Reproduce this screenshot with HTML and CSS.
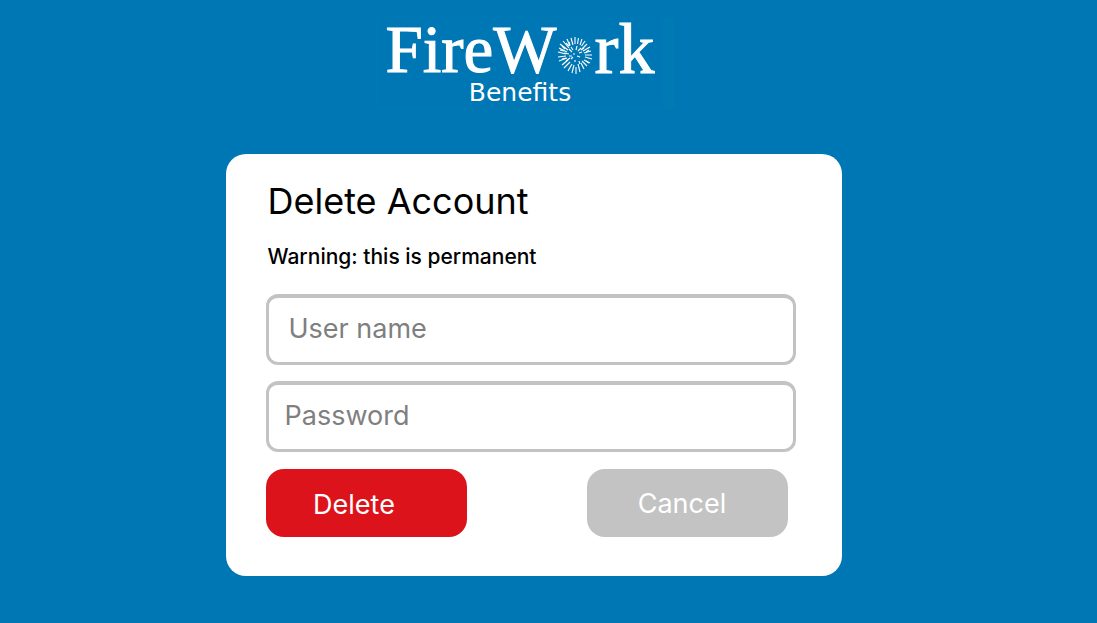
FILE: index.html
```html
<!DOCTYPE html>
<html lang="en">
<head>
<meta charset="utf-8">
<title>Delete Account</title>
<meta name="viewport" content="width=device-width, initial-scale=1">
<link rel="stylesheet" href="styles.css">
</head>
<body class="page">
<header class="brand">
<div class="brand-name"><span>FireW</span><svg class="burst" viewBox="0 0 36 38" aria-hidden="true"><g fill="none" stroke="#fff" stroke-width="1.1"><path d="M18 1v7M21.500 2l-1 6M25 3l-2 6M28 5l-3.500 5M30 8l-5 5M33 11l-7 4M34 15l-7 2M35 19h-7M35 23l-7-2M33 27l-6-3M30 30l-5-5M27 33l-3-6M23 36l-2-8M19 31v7M15 37l2-8M11 35l4-7M7 32l6-6M5 29l6-5M2 25l8-3M1 21l8-1M1 16l8 2M2 12l8 4M3 8l8 6M6 5l6 7M10 3l3 7M14 2l2 7"/><path d="M3 14l4 1M5 10l3 3M9 7l3 3M12 6l1 3M7 17l5 1M5 23l4-1M9 25l4-3M12 13l3 3M14 11l2 3M20 10l-1 4M24 12l-3 3M27 12l-3 2M22 17l3-1M16 18h2M20 20l3 1M18 24v2M14 23l2-2M22 25l1 3M12 20h3M29 16l3-2M29 25l3 2"/></g></svg><span class="brand-end">rk</span></div>
<div class="brand-sub">Benefits</div>
</header>
<main class="card">
<h1 class="title">Delete Account</h1>
<p class="warning">Warning: this is permanent</p>
<form class="form">
<input class="field field-user" type="text" placeholder="User name" aria-label="User name">
<input class="field" type="password" placeholder="Password" aria-label="Password">
<div class="actions">
<button class="button button-delete" type="submit">Delete</button>
<button class="button button-cancel" type="button">Cancel</button>
</div>
</form>
</main>
</body>
</html>
```

FILE: styles.css
```css
* {
  box-sizing: border-box;
}

.page {
  margin: 0;
  min-height: 100vh;
  padding: 17px 30px 24px 0;
  background: #0077b5;
  font-family: Inter, "Liberation Sans", sans-serif;
  display: flex;
  flex-direction: column;
  align-items: center;
}

.brand {
  margin-right: 16px;
  padding: 0 8px 3px;
  border: 1px solid #007ab2;
  border-right-width: 12px;
  color: #fff;
  text-align: center;
}

.brand-name {
  display: flex;
  align-items: center;
  font: 67px/62px "Liberation Serif", serif;
  -webkit-text-stroke: 1px #fff;
}

.brand-end {
  font-size: 72px;
}

.burst {
  width: 36px;
  height: 38px;
  margin: 11px 2px 0 0;
}

.brand-sub {
  padding-top: 1px;
  font: 25px/24px "DejaVu Sans", sans-serif;
}

.card {
  width: 100%;
  max-width: 616px;
  margin-top: 45px;
  padding: 24px 46px 38px 40px;
  border-radius: 20px;
  background: #fff;
}

.title {
  margin: 0 0 0 2px;
  font-size: 36px;
  line-height: 46px;
  font-weight: 400;
  color: #000;
}

.warning {
  margin: 20px 0 25px 2px;
  font-size: 21px;
  line-height: 25px;
  font-weight: 500;
  color: #000;
}

.form {
  display: flex;
  flex-direction: column;
  gap: 16px;
}

.field {
  width: 100%;
  height: 71px;
  padding: 0 16px 4px;
  border: 3px solid #c3c3c3;
  border-top-width: 4px;
  border-radius: 12px;
  background: #fff;
  font: 27px/32px Inter, "Liberation Sans", sans-serif;
  color: #000;
}

.field-user {
  padding-left: 20px;
}

.field::placeholder {
  color: #7f7f7f;
  opacity: 1;
}

.actions {
  display: flex;
  justify-content: space-between;
  padding: 1px 8px 1px 0;
}

.button {
  width: 201px;
  height: 68px;
  border: 0;
  border-radius: 18px;
  font: 27px/32px Inter, "Liberation Sans", sans-serif;
  color: #fff;
}

.button-delete {
  padding: 4px 24px 0 0;
  background: #dc131b;
}

.button-cancel {
  padding: 2px 10px 0 0;
  background: #c3c3c3;
}
```
